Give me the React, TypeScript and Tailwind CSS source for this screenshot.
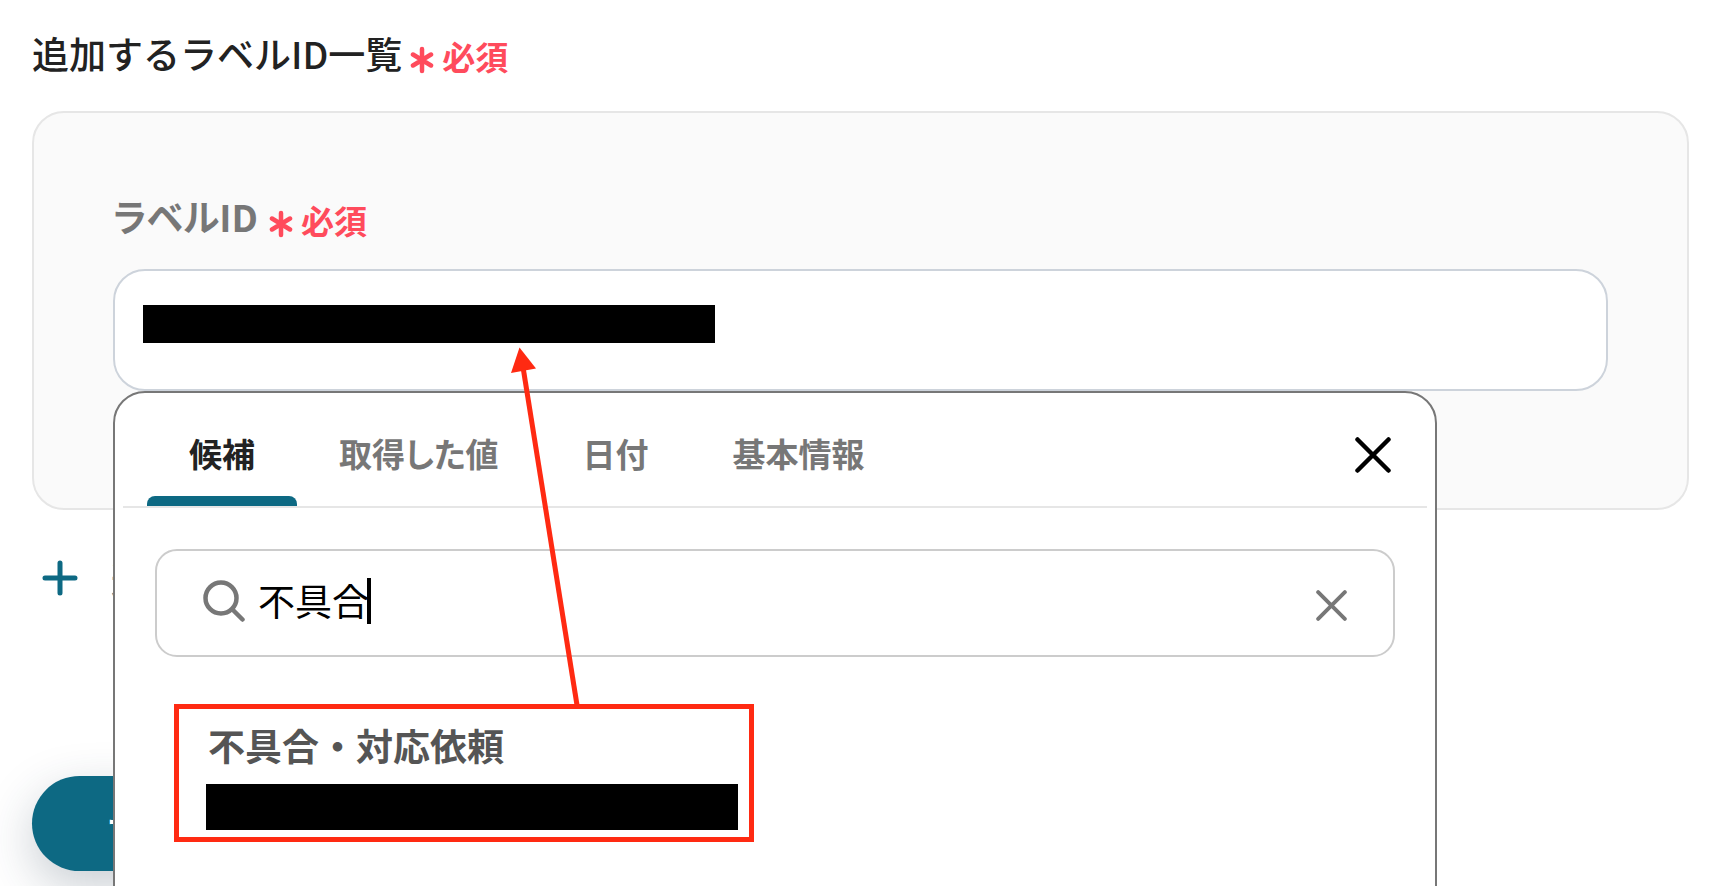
import type { ReactNode } from 'react';

const tabs = [
  { id: 'candidates', label: '候補', active: true },
  { id: 'values', label: '取得した値', active: false },
  { id: 'date', label: '日付', active: false },
  { id: 'basic', label: '基本情報', active: false },
];

const results = [{ id: 1, title: '不具合・対応依頼' }];

function Required() {
  return (
    <span className="mt-2 flex items-center gap-2 text-[33px] leading-10 font-bold text-[#ff4b5c]">
      <svg viewBox="0 0 24 28" className="mt-2 h-7 w-6" fill="none" stroke="currentColor" strokeWidth="4.500" strokeLinecap="round" aria-hidden="true">
        <path d="M12 3v22M3 8.500l18 11M21 8.500l-18 11" />
      </svg>
      必須
    </span>
  );
}

function Cross({ className }: { className: string }) {
  return (
    <svg viewBox="0 0 36 36" className={className} fill="none" stroke="currentColor" strokeWidth="4.500" strokeLinecap="round" aria-hidden="true">
      <path d="M2.500 2.500l31 31M33.500 2.500l-31 31" />
    </svg>
  );
}

function Tab({ active, children }: { active: boolean; children: ReactNode }) {
  return (
    <button
      type="button"
      role="tab"
      aria-selected={active}
      className={`px-[42px] pt-9 text-[33px] leading-[48px] font-bold [font-feature-settings:'palt'] ${active ? 'text-[#222222]' : 'text-[#777777]'}`}
    >
      {children}
    </button>
  );
}

function SuggestPanel() {
  return (
    <div className="absolute top-full right-[171px] left-0 z-10 h-[600px] rounded-t-[32px] border-2 border-[#777777] bg-white">
      <div className="mx-2 flex items-start justify-between border-b-2 border-[#e6e6e6] pr-9 pl-6">
        <div className="flex" role="tablist">
          {tabs.map((t) => (
            <div key={t.id} className="flex flex-col">
              <Tab active={t.active}>{t.label}</Tab>
              <span className={`mt-[19px] h-[10px] rounded-t-lg ${t.active ? 'bg-[#0d6983]' : ''}`} />
            </div>
          ))}
        </div>
        <button type="button" aria-label="閉じる" className="mt-11 text-black">
          <Cross className="size-9" />
        </button>
      </div>

      <div className="mx-10 mt-[41px] flex h-[108px] items-center rounded-[22px] border-2 border-[#cccccc] px-[46px]">
        <svg viewBox="0 0 42 42" className="mb-1 size-[42px] text-[#777777]" fill="none" stroke="currentColor" strokeWidth="4.500" strokeLinecap="round" aria-hidden="true">
          <circle cx="18" cy="18" r="15.500" />
          <path d="M29.500 29.500l10 10" />
        </svg>
        <input
          type="text"
          aria-label="候補を検索"
          defaultValue="不具合"
          className="mb-1.5 ml-[13px] w-[111px] bg-transparent text-[37px] leading-[52px] font-normal text-black outline-none"
        />
        <span className="-ml-0.5 mb-1 h-[46px] w-1 bg-black" />
        <button type="button" aria-label="クリア" className="mt-1 ml-auto text-[#777777]">
          <Cross className="size-[31px]" />
        </button>
      </div>

      <ul className="mt-[47px] ml-[59px]">
        {results.map((r) => (
          <li key={r.id} className="w-[580px] border-[5px] border-[#ff2a12]">
            <button type="button" className="flex w-full flex-col pt-[10px] pr-[11px] pb-[7px] pl-[27px] text-left">
              <span className="pl-0.5 text-[37px] leading-[52px] font-bold text-[#555555]">{r.title}</span>
              <span className="mt-[13px] h-[46px] w-full bg-black" />
            </button>
          </li>
        ))}
      </ul>
    </div>
  );
}

function Arrow() {
  return (
    <svg viewBox="0 0 72 360" className="pointer-events-none absolute top-[78px] left-[397px] z-20 h-[360px] w-[72px]" aria-hidden="true">
      <path d="M13 20L67 358" stroke="#ff2a12" strokeWidth="5" />
      <path d="M9.500 0.500L1 26L26 21.500z" fill="#ff2a12" />
    </svg>
  );
}

export default function App() {
  return (
    <main className="min-h-screen overflow-hidden bg-white pt-7 pr-[33px] pl-8 font-['Noto_Sans_CJK_JP',sans-serif] font-medium text-[#222222]">
      <h2 className="flex items-start gap-2 text-[37px] leading-[50px] font-medium">
        追加するラベルID一覧
        <Required />
      </h2>

      <section className="mt-[33px] rounded-[32px] border-2 border-[#e6e6e6] bg-[#fafafa] px-[79px] pt-[79px] pb-[117px]">
        <label htmlFor="label-id" className="flex items-start gap-[11px] text-[37px] leading-[48px] font-bold text-[#777777] [font-feature-settings:'palt']">
          ラベルID
          <Required />
        </label>
        <div className="relative mt-[29px]">
          <div className="flex h-[122px] items-start rounded-[32px] border-2 border-[#cdd3db] bg-white px-7 pt-[34px]">
            <span className="h-[38px] w-[572px] bg-black" />
            <input id="label-id" type="text" className="h-[38px] min-w-0 flex-1 bg-transparent outline-none" />
          </div>
          <SuggestPanel />
          <Arrow />
        </div>
      </section>

      <button type="button" className="mt-[41px] ml-[10px] flex items-center gap-[33px] text-[37px] leading-[54px] text-[#0d6983]">
        <svg viewBox="0 0 36 36" className="size-9" fill="none" stroke="currentColor" strokeWidth="5" strokeLinecap="round" aria-hidden="true">
          <path d="M18 3v30M3 18h30" />
        </svg>
        追加
      </button>

      <button type="button" className="mt-[171px] flex h-[95px] items-center rounded-full bg-[#0d6983] px-[75px] text-[33px] font-bold text-white shadow-[0_16px_48px_rgba(40,60,80,0.25)]">
        テスト
      </button>
    </main>
  );
}
